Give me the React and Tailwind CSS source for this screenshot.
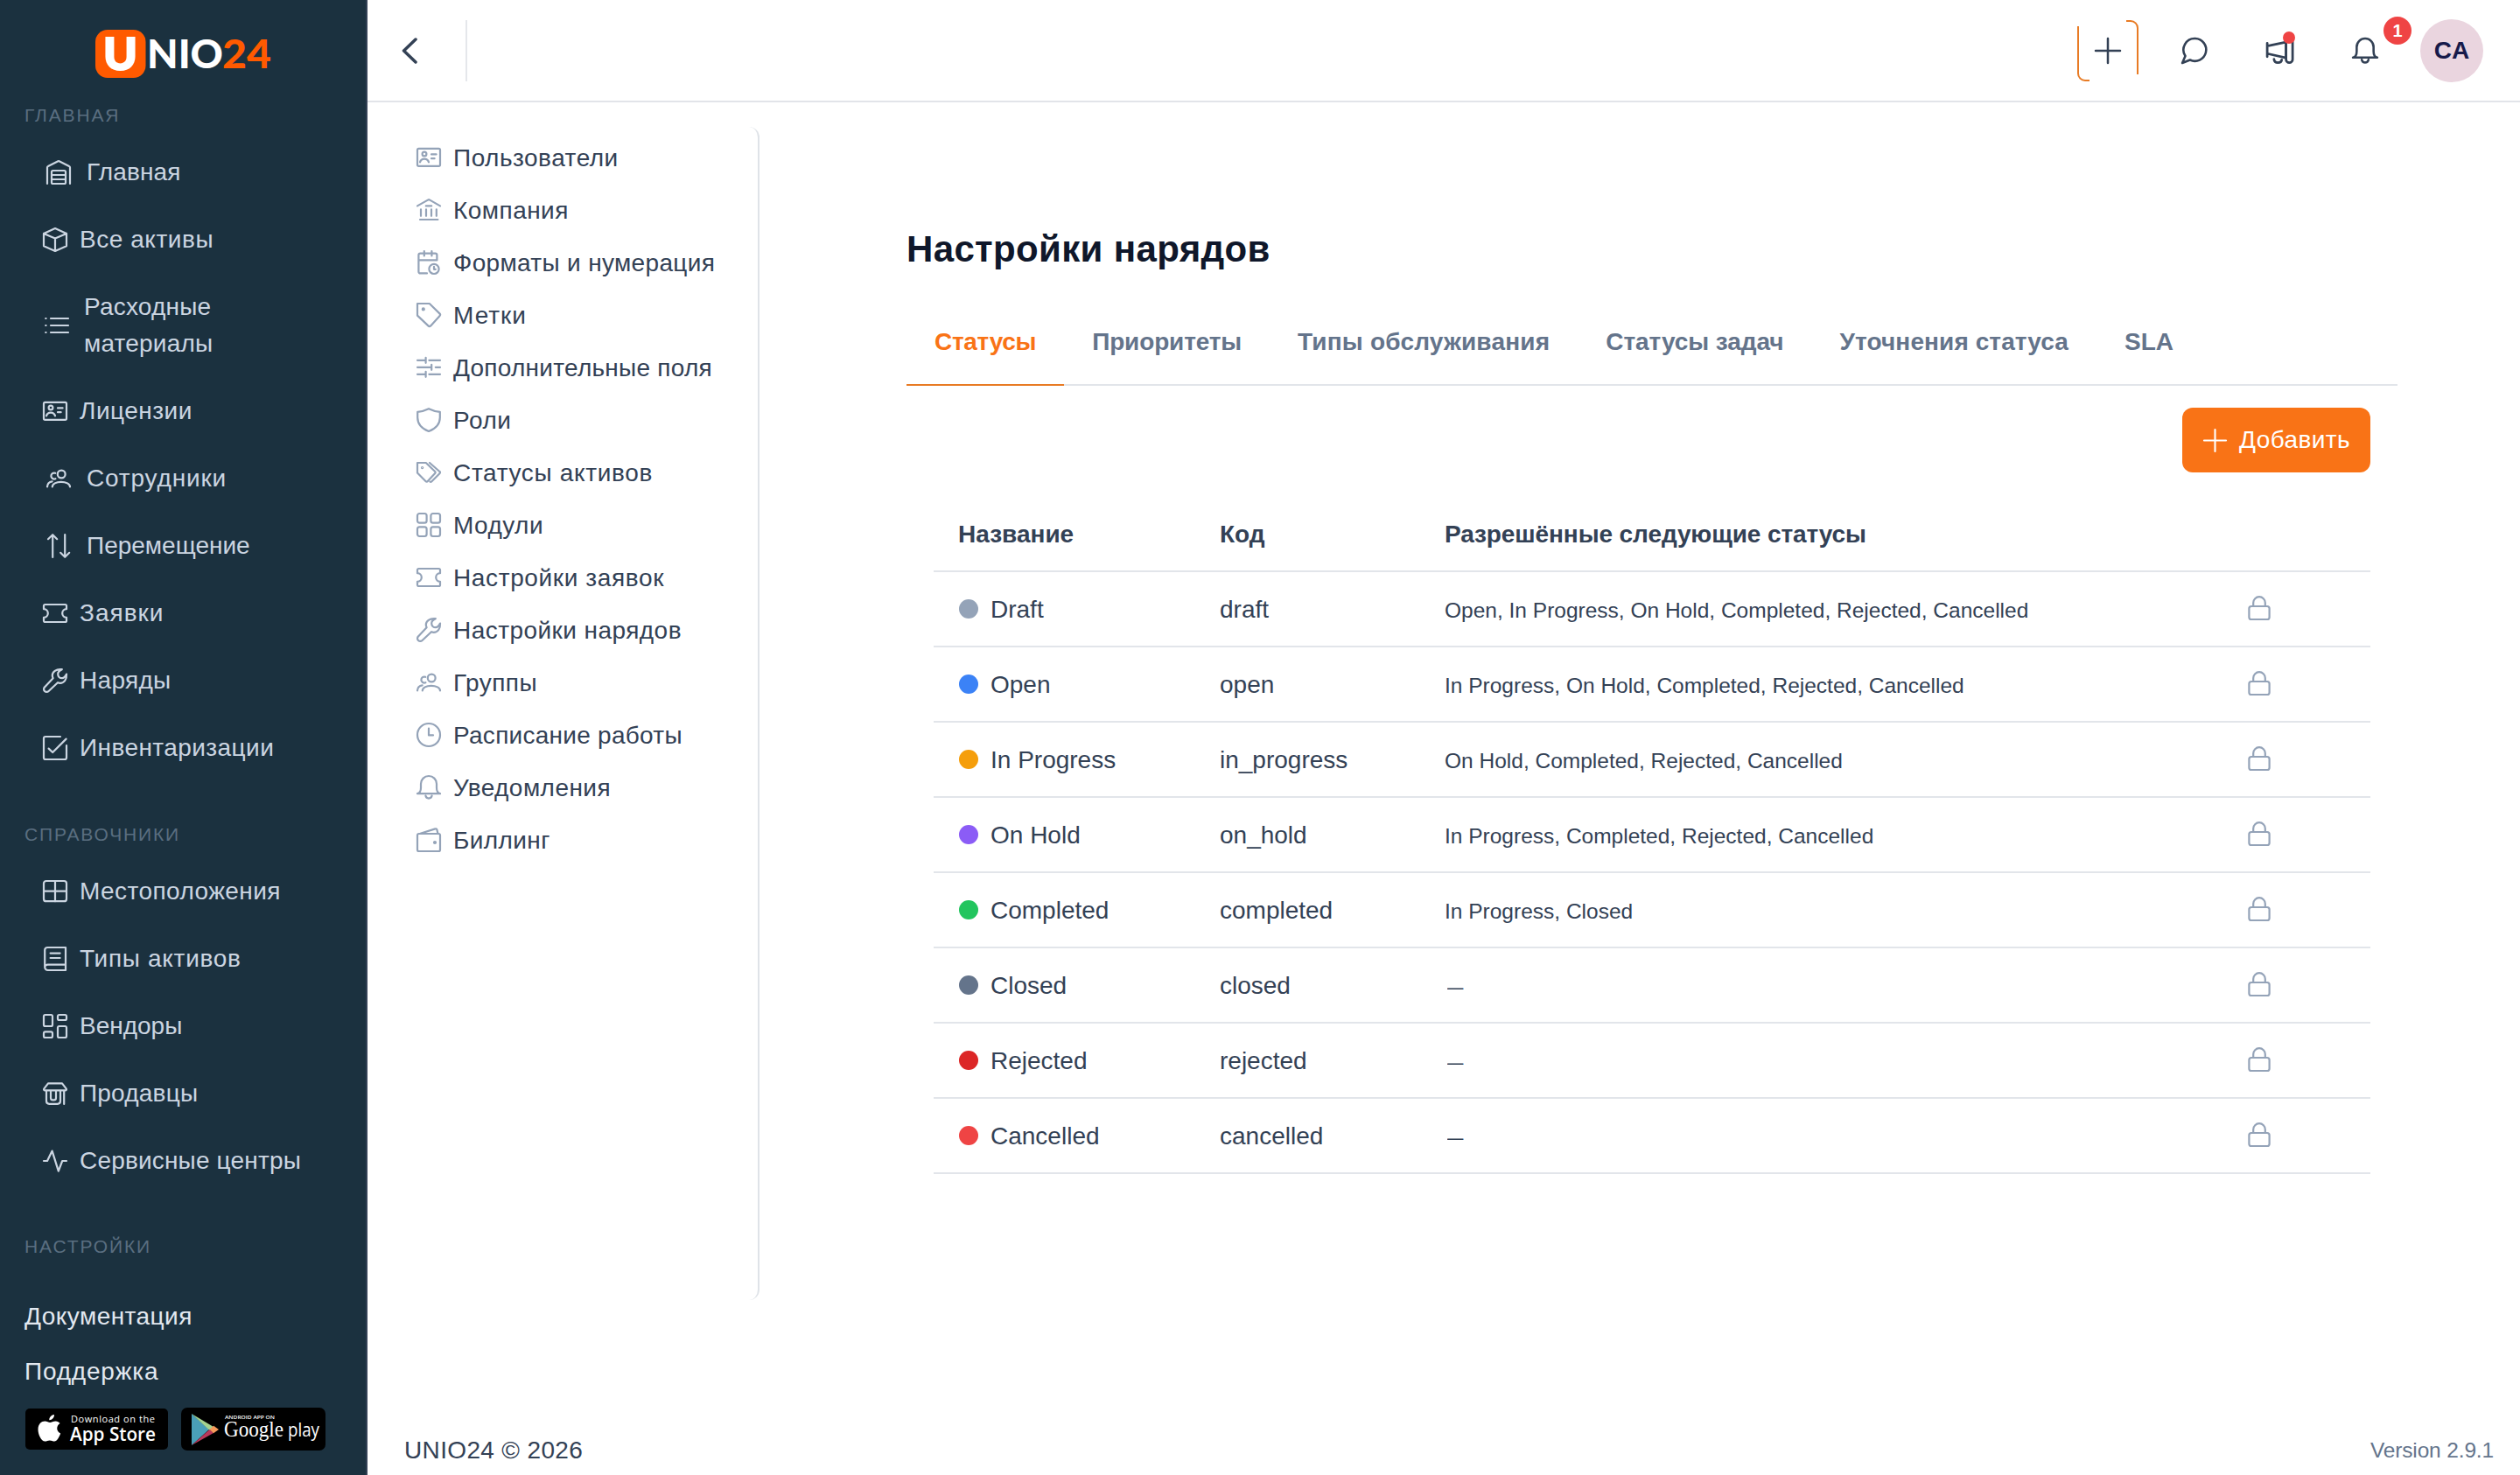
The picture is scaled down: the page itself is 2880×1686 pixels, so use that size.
import { useState } from "react";
import clsx from "clsx";

const ICONS = {
  warehouse: (
    <>
      <path d="M.5 13.5V4.2c0-.3.2-.6.5-.7L6.7.6a.8.8 0 0 1 .6 0L13 3.5c.3.1.5.4.5.7v9.3" />
      <rect x="3" y="6" width="8" height="7.5" rx=".8" />
      <path d="M3 8.5h8M3 11h8" />
    </>
  ),
  box: <path d="M7 .5l6.5 3v7.1L7 13.5.5 10.6V3.5zM.5 3.5L7 6.3l6.5-2.8M7 6.3v7.2" />,
  list: <path d="M3.5 3h10M3.5 7h10M3.5 11h10M.6 3h.2M.6 7h.2M.6 11h.2" />,
  card: (
    <>
      <rect x=".5" y="1.9" width="13" height="10" rx=".8" />
      <circle cx="4.5" cy="5" r="1.2" />
      <path d="M2 9.7a2.6 2.6 0 0 1 5 0M8.5 5.2h2.8M8.5 7.6h1.8" />
    </>
  ),
  group: (
    <>
      <circle cx="8.6" cy="4.5" r="2.2" />
      <path d="M3.4 11.7c0-1.6 2.2-2.8 5-2.8s5.1 1.2 5.1 2.8M5.1 3.9a1.75 1.75 0 1 0 .1 3.2M.5 11.7c.1-1.7 1.2-2.8 2.8-3" />
    </>
  ),
  transfer: <path d="M3.6 13.5V.7M1 3.1L3.6.6l2.5 2.5M10.6.5v12.8M8.1 10.9l2.5 2.5 2.5-2.5" />,
  ticket: (
    <path d="M.5 4.6V2.8c0-.5.4-.8.8-.8h11.4c.4 0 .8.3.8.8v1.8a2.4 2.4 0 0 0 0 4.8v1.8c0 .5-.4.8-.8.8H1.3c-.4 0-.8-.3-.8-.8V9.4a2.4 2.4 0 0 0 0-4.8z" />
  ),
  wrench: (
    <path d="M10.9.6C10 1 8.6 2 8.6 3.2c0 1.4 1 2.4 2.4 2.4 1.1 0 2-1.3 2.5-2.3.2 3.2-1.5 5.1-3.6 5.1-.6 0-1-.1-1.4-.3L3.3 13A1.55 1.55 0 0 1 1 10.7l4.8-5.1C5.5 5 5.4 4.6 5.4 4 5.4 2 7.4.2 10.9.6z" />
  ),
  check: (
    <path d="M13.5 5.6v6.9c0 .6-.4 1-1 1h-11c-.6 0-1-.4-1-1v-11c0-.6.4-1 1-1H10M3.3 7.3l2.3 2.2 7.7-7.7" />
  ),
  grid: (
    <>
      <rect x=".5" y="1" width="13" height="11.6" rx="1.4" />
      <path d="M7 1v11.6M.5 6.8h13" />
    </>
  ),
  book: (
    <path d="M13 .5H2.6c-.8 0-1.5.7-1.5 1.5v9.8c0 .9.8 1.7 1.7 1.7H13M13 .5v13M1.1 11.9c0-.9.8-1.6 1.7-1.6H13M4.3 3.8h5.5M4.3 6.5h5.5" />
  ),
  dashboard: (
    <>
      <rect x=".5" y=".5" width="5" height="6.5" rx=".9" />
      <rect x="8.5" y=".5" width="5" height="3" rx=".9" />
      <rect x=".5" y="10.2" width="5" height="3.3" rx=".9" />
      <rect x="8.5" y="7" width="5" height="6.5" rx=".9" />
    </>
  ),
  store: (
    <path d="M3 1.2h8l2.4 3.1c.2.5-.1.9-.6.9H1.2c-.5 0-.8-.4-.6-.9zM2 5.2v6.1c0 .9.7 1.6 1.6 1.6h4.8c.9 0 1.6-.7 1.6-1.6V5.2M12.1 5.2v7.8M4.5 5.2v4.3c0 .7.5 1.2 1.2 1.2h.6c.7 0 1.2-.5 1.2-1.2V5.2" />
  ),
  pulse: <path d="M.5 7h2l2.8-5.7 3.6 11.5L11.1 7h2.4" />,
  bank: (
    <path d="M.5 4.7L6.7 1.2a.8.8 0 0 1 .7 0l6.1 3.5M5.4 4.7h3.2M2.5 6.7v3.7M5.5 6.7v3.7M8.5 6.7v3.7M11.4 6.7v3.7M2 12.5h10.2" />
  ),
  calendar: (
    <>
      <path d="M6 13.2H2.2c-.6 0-1-.4-1-1V2.8c0-.6.4-1 1-1h8.5c.6 0 1 .4 1 1v2.9H1.2M4.4.5v2.7M8.7.5v2.7" />
      <circle cx="10" cy="10.7" r="2.8" />
      <path d="M10 9.4v1.5h.9" />
    </>
  ),
  tag: (
    <>
      <path d="M.5.5h6.9l5.8 5.7c.4.4.4 1 0 1.4l-5.1 5.6c-.4.4-1 .4-1.4 0L.5 7.3z" />
      <circle cx="3.9" cy="3.7" r=".5" />
    </>
  ),
  sliders: (
    <path d="M.5 2.9h4.6M5.3 1.4v3M7.2 2.9h6.3M.5 6.9h8M8.6 5.4v3M10.9 6.9h2.6M.5 10.9h4.6M5.3 9.4v3M7.2 10.9h6.3" />
  ),
  shield: (
    <path d="M7 .6c2 1 4.2 1.6 6.4 1.8v3.2c0 3.8-2.8 6.5-6.4 7.9C3.4 12.1.6 9.4.6 5.6V2.4C2.8 2.2 5 1.6 7 .6z" />
  ),
  tags: (
    <>
      <path d="M.5 1.5h4.9l5.2 5c.3.3.3.7 0 1L6.4 12c-.3.4-.8.4-1.2 0L.5 7.2zM7.5 1.5l5.7 5c.4.3.4.7 0 1.1l-4.5 4.5c-.3.3-.7.4-1 .2" />
      <circle cx="3.3" cy="4.3" r=".3" />
    </>
  ),
  modules: (
    <>
      <rect x=".5" y=".5" width="5.3" height="5.3" rx="1.2" />
      <rect x="8.2" y=".5" width="5.3" height="5.3" rx="1.2" />
      <rect x=".5" y="8.2" width="5.3" height="5.3" rx="1.2" />
      <rect x="8.2" y="8.2" width="5.3" height="5.3" rx="1.2" />
    </>
  ),
  clock: (
    <>
      <circle cx="7" cy="7" r="6.5" />
      <path d="M7 3.3v3.9h2.5" />
    </>
  ),
  bell: (
    <path d="M.5 10.6c1.5-.3 2-1.5 2-3.3V5a4.5 4.5 0 0 1 9 0v2.3c0 1.8.5 3 2 3.3zM5.2 11.8c.2.9.9 1.5 1.8 1.5s1.6-.6 1.8-1.5" />
  ),
  wallet: (
    <>
      <rect x=".5" y="3.5" width="13" height="10" rx=".9" />
      <path d="M2.2 3.4L10.7.7c.5-.2.9.1 1 .6l.5 2.1" />
      <circle cx="10.5" cy="8.5" r=".5" />
    </>
  ),
  plus: <path d="M7 .5v13M.5 7h13" />,
  chat: <path d="M7.4.5a6 6 0 1 1-2.8 11.4L.5 13.5l1.6-3.7A6 6 0 0 1 7.4.5z" />,
  megaphone: (
    <>
      <path d="M.5 3.3v7M.5 4.8l9.7-2v8.1L.5 8.7" />
      <path d="M10.2 3v8.7a1.65 1.65 0 0 0 3.4 0V2.5M4 11.6c.1 1 .9 1.8 2 1.8s1.9-.7 2-1.5" />
    </>
  ),
  lock: (
    <>
      <rect x="1.2" y="6" width="11.6" height="7.5" rx="1.3" />
      <path d="M3.6 6V4a3.4 3.4 0 0 1 6.8 0v2" />
    </>
  ),
};

function Icon({ name, className = "size-7", strokeWidth = 1.1 }) {
  return (
    <svg
      viewBox="0 0 14 14"
      fill="none"
      stroke="currentColor"
      strokeWidth={strokeWidth}
      strokeLinecap="round"
      strokeLinejoin="round"
      className={clsx("shrink-0 overflow-visible", className)}
    >
      {ICONS[name]}
    </svg>
  );
}

const mainLinks = [
  { icon: "warehouse", label: "Главная", className: "pl-[53px] gap-[18px] tracking-[0.15px]" },
  { icon: "box", label: "Все активы", className: "pl-[49px] gap-[14px] tracking-[0.55px]" },
  { icon: "list", label: "Расходные материалы", className: "pl-[51px] gap-[17px] tracking-[0.2px]", tall: true },
  { icon: "card", label: "Лицензии", className: "pl-[49px] gap-[14px] tracking-[0.5px]" },
  { icon: "group", label: "Сотрудники", className: "pl-[53px] gap-[18px] tracking-[0.83px]" },
  { icon: "transfer", label: "Перемещение", className: "pl-[53px] gap-[18px]" },
  { icon: "ticket", label: "Заявки", className: "pl-[49px] gap-[14px] tracking-[1px]" },
  { icon: "wrench", label: "Наряды", className: "pl-[49px] gap-[14px] tracking-[0.3px]" },
  { icon: "check", label: "Инвентаризации", className: "pl-[49px] gap-[14px] tracking-[0.43px]" },
];

const directoryLinks = [
  { icon: "grid", label: "Местоположения", className: "pl-[49px] gap-[14px] tracking-[0.43px]" },
  { icon: "book", label: "Типы активов", className: "pl-[49px] gap-[14px] tracking-[0.7px]" },
  { icon: "dashboard", label: "Вендоры", className: "pl-[49px] gap-[14px]" },
  { icon: "store", label: "Продавцы", className: "pl-[49px] gap-[14px] tracking-[0.2px]" },
  { icon: "pulse", label: "Сервисные центры", className: "pl-[49px] gap-[14px] tracking-[0.18px]" },
];

const settingsLinks = [
  ["card", "Пользователи", "tracking-[0.5px]"],
  ["bank", "Компания", "tracking-[0.46px]"],
  ["calendar", "Форматы и нумерация", "tracking-[0.34px]"],
  ["tag", "Метки", "tracking-[1px]"],
  ["sliders", "Дополнительные поля", "tracking-[0.26px]"],
  ["shield", "Роли", "tracking-[0.5px]"],
  ["tags", "Статусы активов", "tracking-[0.66px]"],
  ["modules", "Модули", "tracking-[0.45px]"],
  ["ticket", "Настройки заявок", "tracking-[0.63px]"],
  ["wrench", "Настройки нарядов", "tracking-[0.45px]"],
  ["group", "Группы", "tracking-[0.45px]"],
  ["clock", "Расписание работы", "tracking-[0.27px]"],
  ["bell", "Уведомления", "tracking-[0.45px]"],
  ["wallet", "Биллинг", "tracking-[0.4px]"],
];

const tabs = [
  ["Статусы", "tracking-[-0.3px]"],
  ["Приоритеты", "tracking-[-0.15px]"],
  ["Типы обслуживания", "tracking-[0.2px]"],
  ["Статусы задач", "tracking-[-0.06px]"],
  ["Уточнения статуса", "tracking-[0.1px]"],
  ["SLA", "tracking-normal"],
];

const statuses = [
  { name: "Draft", code: "draft", dot: "bg-[#94a3b8]", next: "Open, In Progress, On Hold, Completed, Rejected, Cancelled" },
  { name: "Open", code: "open", dot: "bg-[#3b82f6]", next: "In Progress, On Hold, Completed, Rejected, Cancelled" },
  { name: "In Progress", code: "in_progress", dot: "bg-[#f59e0b]", next: "On Hold, Completed, Rejected, Cancelled" },
  { name: "On Hold", code: "on_hold", dot: "bg-[#8b5cf6]", next: "In Progress, Completed, Rejected, Cancelled" },
  { name: "Completed", code: "completed", dot: "bg-[#22c55e]", next: "In Progress, Closed" },
  { name: "Closed", code: "closed", dot: "bg-[#64748b]" },
  { name: "Rejected", code: "rejected", dot: "bg-[#dc2626]" },
  { name: "Cancelled", code: "cancelled", dot: "bg-[#ef4444]" },
];

function Logo() {
  return (
    <svg viewBox="0 0 204 64" className="ml-[107px] mt-[26px] h-[64px] w-[204px]">
      <rect x="2" y="8" width="57.5" height="55" rx="14" fill="#ff5a00" />
      <text x="11" y="53.5" fontFamily="Lato" fontWeight="900" fontSize="52" fill="#fff" stroke="#fff" strokeWidth="2" textLength="39" lengthAdjust="spacingAndGlyphs">
        U
      </text>
      <text x="61" y="52" fontFamily="Lato" fontWeight="900" fontSize="46" fill="#fff" textLength="87" lengthAdjust="spacingAndGlyphs">
        NIO
      </text>
      <text x="147" y="52" fontFamily="Lato" fontWeight="900" fontSize="46" fill="#ff5a00" textLength="56" lengthAdjust="spacingAndGlyphs">
        24
      </text>
    </svg>
  );
}

function SectionTitle({ children, className }) {
  return (
    <div className={clsx("flex h-[52px] items-center pl-7 text-[21px] tracking-[1.85px] text-[#5a6e80]", className)}>
      {children}
    </div>
  );
}

function SideLink({ icon, label, className, tall }) {
  return (
    <a className={clsx("flex items-center leading-[42px]", className, tall ? "h-[119px]" : "h-[77px]")}>
      <Icon name={icon} />
      <span className={clsx(tall && "w-[180px]")}>{label}</span>
    </a>
  );
}

function StoreBadges() {
  return (
    <div className="mt-2.5 flex items-center gap-[15px] pl-[29px]">
      <svg viewBox="0 0 163 47" className="h-[47px] w-[163px]">
        <rect width="163" height="47" rx="5" fill="#000" />
        <path
          d="M33 7c.3 3-2.5 6.3-5.7 6.2C27 10 30 7.2 33 7zM39.5 17c-4.8 3-4 9.5.7 11.5-1.5 4-4 9-7 9-2 0-3-1.1-5.4-1.1s-3.3 1.2-5.3 1.2c-4.5 0-8-8-8-13.5 0-6.5 4-9.5 7.8-9.5 2.4 0 4.4 1.5 5.9 1.500s3.800-1.700 6.500-1.600c2 .1 3.700 1 4.800 2.500z"
          fill="#fff"
        />
        <text x="52" y="15.5" fontFamily="Open Sans" fontWeight="500" fontSize="11" fill="#fff" textLength="96">
          Download on the
        </text>
        <text x="51" y="37" fontFamily="Open Sans" fontWeight="600" fontSize="22" fill="#fff" textLength="98" lengthAdjust="spacingAndGlyphs">
          App Store
        </text>
      </svg>
      <svg viewBox="0 0 165 49" className="h-[49px] w-[165px]">
        <rect width="165" height="49" rx="7" fill="#000" />
        <path d="M12 7v36l20-18z" fill="#4a9fb8" />
        <path d="M12 7l25 15-4.5 4z" fill="#a5d38f" />
        <path d="M12 43l20.5-18 4.5 4z" fill="#b8395c" />
        <path d="M32.5 25l4.7-4.3L43 25l-6 4.2z" fill="#f79a5b" />
        <text x="50" y="12.5" fontFamily="Open Sans" fontWeight="600" fontSize="6" fill="#fff" textLength="57" lengthAdjust="spacingAndGlyphs">
          ANDROID APP ON
        </text>
        <text x="49" y="32.5" fontFamily="Liberation Serif" fontSize="25" fill="#fff" textLength="68" lengthAdjust="spacingAndGlyphs">
          Google
        </text>
        <text x="122" y="32.5" fontFamily="Open Sans" fontSize="22" fill="#fff" textLength="36" lengthAdjust="spacingAndGlyphs">
          play
        </text>
      </svg>
    </div>
  );
}

function Sidebar() {
  return (
    <aside className="flex h-full w-[420px] shrink-0 flex-col border-r-2 border-[#334155] bg-[#1b313f] text-[#cbd5e1]">
      <Logo />
      <SectionTitle className="mt-4">ГЛАВНАЯ</SectionTitle>
      {mainLinks.map((link) => (
        <SideLink key={link.label} {...link} />
      ))}
      <SectionTitle className="mt-[35px]">СПРАВОЧНИКИ</SectionTitle>
      {directoryLinks.map((link) => (
        <SideLink key={link.label} {...link} />
      ))}
      <SectionTitle className="mt-[34px]">НАСТРОЙКИ</SectionTitle>
      <div className="mt-[22px] flex flex-col pl-7 leading-[63px] text-[#e2e8f0]">
        <a className="tracking-[0.46px]">Документация</a>
        <a className="tracking-[0.8px]">Поддержка</a>
      </div>
      <StoreBadges />
    </aside>
  );
}

function Header() {
  return (
    <header className="flex h-[117px] shrink-0 items-center border-b-2 border-[#e2e4e9] pr-[42px] text-[#334155]">
      <svg viewBox="0 0 18 30" className="ml-[39px] h-[30px] w-[18px]" fill="none" stroke="currentColor" strokeWidth="3.5" strokeLinecap="round" strokeLinejoin="round">
        <path d="M16 2L2.500 15 16 28" />
      </svg>
      <div className="ml-[55px] h-[70px] w-0.5 bg-[#e5e7eb]" />
      <div className="ml-auto flex items-center">
        <button className="flex">
          <svg viewBox="0 0 70 70" className="size-[70px]" fill="none" strokeLinecap="round">
            <path d="M1 7v54a8 8 0 0 0 8 8h5M56 1h5a8 8 0 0 1 8 8v53" stroke="#e87b24" strokeWidth="2" strokeLinecap="butt" />
            <path d="M35 21v28M21 35h28" stroke="currentColor" strokeWidth="2.5" />
          </svg>
        </button>
        <button className="ml-[49px]">
          <Icon name="chat" className="size-[30px]" strokeWidth={1.2} />
        </button>
        <button className="relative ml-[67px]">
          <Icon name="megaphone" className="size-[31px]" strokeWidth={1.25} />
          <span className="absolute -right-[2px] -top-[6px] size-3.5 rounded-full bg-[#ef4444]" />
        </button>
        <button className="relative ml-[67px]">
          <Icon name="bell" className="size-[30px]" strokeWidth={1.2} />
          <span className="absolute -top-[24px] left-[36px] flex size-8 items-center justify-center rounded-full bg-[#ef4444] text-[20px] font-bold text-white">
            1
          </span>
        </button>
        <div className="ml-[48px] flex size-[72px] items-center justify-center rounded-full bg-[#ead5df] font-bold text-[#171a4a]">
          CA
        </div>
      </div>
    </header>
  );
}

function SettingsMenu() {
  return (
    <nav className="mt-7 flex h-[1341px] w-[448px] shrink-0 flex-col rounded-r-xl border-r-2 border-[#dfe3e8] pl-14 pt-[5px]">
      {settingsLinks.map(([icon, label, tracking]) => (
        <a key={label} className="flex h-[60px] items-center gap-[14px] text-[#334155]">
          <Icon name={icon} className="size-7 text-[#94a3b8]" />
          <span className={clsx("pt-0.5", tracking)}>{label}</span>
        </a>
      ))}
    </nav>
  );
}

function StatusTable() {
  return (
    <table className="mt-[27px] w-full table-fixed text-left">
      <colgroup>
        <col className="w-[299px]" />
        <col className="w-[257px]" />
        <col className="w-[886px]" />
        <col />
      </colgroup>
      <thead>
        <tr className="h-[86px] border-b-2 border-[#e2e5ea]">
          <th className="pl-7 pt-0.5">Название</th>
          <th className="pl-7 pt-0.5">Код</th>
          <th className="pl-7 pt-0.5 tracking-[-0.1px]">Разрешённые следующие статусы</th>
          <th />
        </tr>
      </thead>
      <tbody>
        {statuses.map(({ name, code, dot, next }) => (
          <tr key={code} className="h-[86px] border-b-2 border-[#e2e5ea]">
            <td className="pl-[29px] pt-px">
              <span className="flex items-center gap-[14px]">
                <span className={clsx("mb-0.5 size-[22px] rounded-full", dot)} />
                {name}
              </span>
            </td>
            <td className="pl-7 pt-px">{code}</td>
            <td className="pl-7 pt-[3px] text-[24.5px]">
              {next || <span className="inline-block scale-x-75">—</span>}
            </td>
            <td className="pb-[3px] pl-[59px] text-[#94a3b8]">
              <Icon name="lock" />
            </td>
          </tr>
        ))}
      </tbody>
    </table>
  );
}

function WorkOrderSettings() {
  const [active, setActive] = useState("Статусы");

  return (
    <section className="ml-[168px] mt-[138px] w-[1704px]">
      <h1 className="text-[42px] font-bold leading-[60px] tracking-[0.35px] text-[#0f172a]">Настройки нарядов</h1>
      <div className="mt-[25px] flex border-b-2 border-[#e2e5ea]">
        {tabs.map(([tab, tracking]) => (
          <button
            key={tab}
            onClick={() => setActive(tab)}
            className={clsx(
              "-mb-0.5 h-[101px] border-b-2 px-8 pt-0.5 font-bold",
              tracking,
              tab === active ? "border-[#e87b24] text-[#f97316]" : "border-transparent text-[#64748b]",
            )}
          >
            {tab}
          </button>
        ))}
      </div>
      <div className="px-[31px] pt-[25px]">
        <button className="ml-auto flex h-[74px] w-[215px] items-center gap-[14px] rounded-xl bg-[#f97316] pl-6 tracking-[0.4px] text-white">
          <Icon name="plus" className="size-[27px]" />
          Добавить
        </button>
        <StatusTable />
      </div>
    </section>
  );
}

export default function App() {
  return (
    <div className="flex h-[1686px] w-[2880px] overflow-hidden bg-white font-['Liberation_Sans',Arial,sans-serif] text-[28px] leading-[42px] text-[#334155]">
      <Sidebar />
      <div className="flex min-w-0 grow flex-col">
        <Header />
        <main className="flex grow">
          <SettingsMenu />
          <WorkOrderSettings />
        </main>
        <footer className="flex h-[58px] shrink-0 items-center justify-between pl-[42px] pr-[30px] pt-0.5">
          <span className="tracking-[0.35px]">UNIO24 © 2026</span>
          <span className="text-[24.5px] tracking-[-0.15px] text-[#64748b]">Version 2.9.1</span>
        </footer>
      </div>
    </div>
  );
}
